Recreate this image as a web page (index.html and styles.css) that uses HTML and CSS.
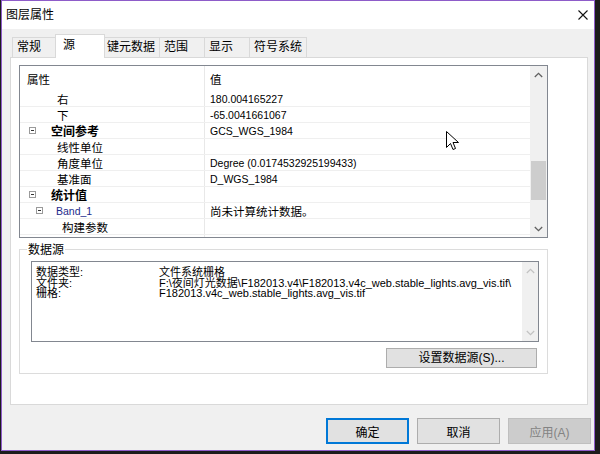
FILE: index.html
```html
<!DOCTYPE html>
<html lang="zh-CN">
<head>
<meta charset="utf-8">
<title>图层属性</title>
<link rel="stylesheet" href="styles.css">
</head>
<body>
<div class="window">
  <div class="titlebar">
    <span class="title">图层属性</span>
    <svg class="close" width="10" height="10" viewBox="0 0 10 10"><path d="M0.5 0.5L9.5 9.5M9.5 0.5L0.5 9.5" stroke="#111" stroke-width="1.1" fill="none"/></svg>
  </div>
  <div class="main">
    <div class="tabs">
      <div class="tab">常规</div>
      <div class="tab active">源</div>
      <div class="tab">键元数据</div>
      <div class="tab">范围</div>
      <div class="tab">显示</div>
      <div class="tab">符号系统</div>
    </div>
    <div class="panel">
      <div class="grid">
        <div class="rows">
          <div class="row head"><div class="k hk">属性</div><div class="v hv">值</div></div>
          <div class="row"><div class="k ind1">右</div><div class="v">180.004165227</div></div>
          <div class="row"><div class="k ind1">下</div><div class="v">-65.0041661067</div></div>
          <div class="row"><div class="k cat"><span class="tog"></span><b>空间参考</b></div><div class="v">GCS_WGS_1984</div></div>
          <div class="row"><div class="k ind1">线性单位</div><div class="v"></div></div>
          <div class="row"><div class="k ind1">角度单位</div><div class="v">Degree (0.0174532925199433)</div></div>
          <div class="row"><div class="k ind1">基准面</div><div class="v">D_WGS_1984</div></div>
          <div class="row"><div class="k cat"><span class="tog"></span><b>统计值</b></div><div class="v"></div></div>
          <div class="row"><div class="k sub"><span class="tog"></span><span class="band">Band_1</span></div><div class="v zh">尚未计算统计数据。</div></div>
          <div class="row"><div class="k ind2">构建参数</div><div class="v"></div></div>
          <div class="row"><div class="k ind2"></div><div class="v"></div></div>
        </div>
        <div class="vscroll">
          <span class="arr"><svg width="9" height="6" viewBox="0 0 9 6"><path d="M0.8 5L4.5 1.3L8.2 5" fill="none" stroke="#606060" stroke-width="1.3"/></svg></span>
          <span class="track"><span class="thumb" style="margin-top:78px;height:39px"></span></span>
          <span class="arr"><svg width="9" height="6" viewBox="0 0 9 6"><path d="M0.8 1L4.5 4.7L8.2 1" fill="none" stroke="#606060" stroke-width="1.3"/></svg></span>
        </div>
      </div>
      <div class="group">
        <div class="ghead"><span class="glabel">数据源</span></div>
        <div class="gbody">
          <div class="list">
            <div class="list-content">
              <div class="lrow"><span class="lk">数据类型:</span><span class="lv">文件系统栅格</span></div>
              <div class="lrow"><span class="lk">文件夹:</span><span class="lv">F:\夜间灯光数据\F182013.v4\F182013.v4c_web.stable_lights.avg_vis.tif\</span></div>
              <div class="lrow"><span class="lk">栅格:</span><span class="lv">F182013.v4c_web.stable_lights.avg_vis.tif</span></div>
            </div>
            <div class="vscroll small">
              <span class="arr"><svg width="9" height="6" viewBox="0 0 9 6"><path d="M0.8 5L4.5 1.3L8.2 5" fill="none" stroke="#c2c2c2" stroke-width="1.2"/></svg></span>
              <span class="track"></span>
              <span class="arr"><svg width="9" height="6" viewBox="0 0 9 6"><path d="M0.8 1L4.5 4.7L8.2 1" fill="none" stroke="#c2c2c2" stroke-width="1.2"/></svg></span>
            </div>
          </div>
          <div class="gbtns"><button class="btn wide">设置数据源(S)...</button></div>
        </div>
      </div>
    </div>
    <div class="actions">
      <button class="btn default">确定</button>
      <button class="btn">取消</button>
      <button class="btn disabled">应用(A)</button>
    </div>
  </div>
</div>
<svg class="cursor" width="13" height="20" viewBox="0 0 13 20"><path d="M0.5 0.5V16.5L4.5 12.5L7 18.5L9.5 17.5L7 11.5H12.5Z" fill="#fff" stroke="#000" stroke-width="1"/></svg>
</body>
</html>
```
FILE: styles.css
```css
* { box-sizing: border-box; }
html, body { margin: 0; padding: 0; }
body {
  width: 600px;
  height: 454px;
  background: #1c1c1c;
  font-family: "Liberation Sans", "Noto Sans CJK SC", sans-serif;
  color: #000;
  overflow: hidden;
  position: relative;
}
.window {
  margin-left: 1px;
  width: 594px;
  height: 451px;
  border: 1px solid #8e5cc9;
  background: #f0f0f0;
  display: flex;
  flex-direction: column;
}
.titlebar {
  flex: none;
  height: 28px;
  background: #fff;
  display: flex;
  align-items: center;
  justify-content: space-between;
  padding: 0 6px 0 4px;
  font-size: 12px;
}
.title { line-height: 14px; }
.close { display: block; }
.main {
  flex: 1;
  display: flex;
  flex-direction: column;
  padding: 5px 3px 0 8px;
}
.tabs {
  display: flex;
  align-items: flex-end;
  height: 23px;
  margin-left: 2px;
  position: relative;
  z-index: 1;
}
.tab {
  height: 20px;
  min-width: 46px;
  padding: 0 4px;
  margin-left: -1px;
  border: 1px solid #d9d9d9;
  border-bottom: none;
  font-size: 12px;
  line-height: 18px;
  white-space: nowrap;
  background: #f0f0f0;
}
.tab:first-child { margin-left: 0; }
.tab.active {
  height: 24px;
  min-width: 50px;
  margin: 0 -2px -1px -3px;
  padding-left: 7px;
  line-height: 20px;
  background: #fff;
  position: relative;
  z-index: 2;
}
.panel {
  flex: none;
  width: 578px;
  height: 348px;
  border: 1px solid #d9d9d9;
  background: #fff;
  padding: 7px 0 0 8px;
}
.grid {
  width: 529px;
  height: 173px;
  border: 1px solid #828790;
  display: flex;
}
.rows { flex: 1; overflow: hidden; }
.row {
  display: flex;
  height: 16px;
  border-bottom: 1px solid #efefef;
}
.row.head { height: 25px; border-bottom: none; }
.k {
  width: 184px;
  flex: none;
  display: flex;
  align-items: center;
  font-size: 11.5px;
  white-space: nowrap;
}
.v {
  flex: 1;
  display: flex;
  align-items: center;
  border-left: 1px solid #e8e8e8;
  padding-left: 5px;
  font-size: 10.5px;
  white-space: nowrap;
}
.v.zh, .v.hv { font-size: 11.5px; }
.hk { padding-left: 7px; }
.ind1 { padding-left: 37px; }
.ind2 { padding-left: 42px; }
.cat { padding-left: 9px; }
.cat .tog { margin-right: 15px; }
.cat b { font-weight: bold; font-size: 12px; }
.sub { padding-left: 16px; }
.sub .tog { margin-right: 13px; }
.band { color: #1d2c8c; font-size: 10.5px; }
.tog {
  width: 7px;
  height: 7px;
  border: 1px solid #9a9a9a;
  position: relative;
  flex: none;
  display: flex;
  align-items: center;
  justify-content: center;
}
.tog::after {
  content: "";
  width: 3px;
  height: 1px;
  background: #333;
}
.vscroll {
  width: 17px;
  flex: none;
  background: #f0f0f0;
  display: flex;
  flex-direction: column;
}
.vscroll.small { width: 16px; }
.arr {
  height: 17px;
  flex: none;
  display: flex;
  align-items: center;
  justify-content: center;
}
.arr svg { display: block; }
.track { flex: 1; }
.thumb {
  display: block;
  width: 15px;
  margin-left: auto;
  margin-right: auto;
  background: #cdcdcd;
}
.group { width: 529px; margin-top: 5px; }
.ghead {
  display: flex;
  height: 14px;
  font-size: 12px;
  line-height: 14px;
}
.ghead::before {
  content: "";
  width: 7px;
  height: 7px;
  align-self: flex-end;
  border-top: 1px solid #dcdcdc;
  border-left: 1px solid #dcdcdc;
}
.ghead::after {
  content: "";
  flex: 1;
  height: 7px;
  align-self: flex-end;
  border-top: 1px solid #dcdcdc;
  border-right: 1px solid #dcdcdc;
}
.glabel { padding: 0 1px; color: #000; }
.gbody {
  border: 1px solid #dcdcdc;
  border-top: none;
  padding: 4px 8px 5px 11px;
}
.list {
  height: 81px;
  border: 1px solid #828790;
  display: flex;
  background: #fff;
}
.list-content {
  flex: 1;
  padding: 5px 4px;
  font-size: 11px;
  line-height: 10.5px;
  overflow: hidden;
}
.lrow { display: flex; white-space: nowrap; }
.lk { width: 123px; flex: none; }
.gbtns {
  display: flex;
  justify-content: flex-end;
  margin-top: 6px;
  padding-right: 2px;
}
.btn {
  width: 83px;
  height: 26px;
  margin: 0;
  padding: 0;
  border: 1px solid #adadad;
  background: #e1e1e1;
  font-family: "Liberation Sans", "Noto Sans CJK SC", sans-serif;
  font-size: 12px;
  color: #000;
}
.btn.wide { width: 151px; height: 20px; line-height: 16px; }
.btn.default {
  border-color: #0078d7;
  box-shadow: inset 0 0 0 1px #0078d7;
}
.btn.disabled {
  background: #cccccc;
  border-color: #bfbfbf;
  color: #838383;
}
.actions {
  display: flex;
  justify-content: flex-end;
  gap: 8px;
  margin-top: 13px;
}
.cursor {
  position: absolute;
  left: 446px;
  top: 131px;
  display: block;
}
```
